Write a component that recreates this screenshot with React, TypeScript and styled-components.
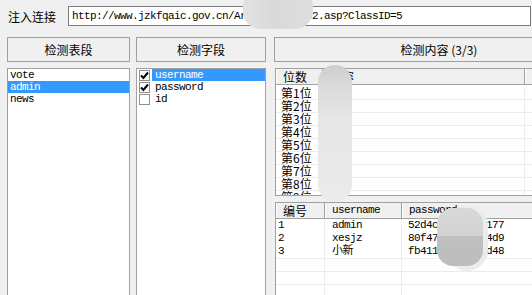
import styled, { createGlobalStyle } from "styled-components";

const MONO = `"Liberation Mono", "Noto Sans CJK SC", monospace`;
const CJK = `"Noto Sans CJK SC", "Liberation Sans", sans-serif`;

const GlobalStyle = createGlobalStyle`
  html, body {
    margin: 0;
    padding: 0;
    background: #f0f0f0;
  }
  body {
    font-family: ${CJK};
  }
`;

const tables = ["vote", "admin", "news"];
const fields = [
  { name: "username", checked: true },
  { name: "password", checked: true },
  { name: "id", checked: false },
];
const digits = [1, 2, 3, 4, 5, 6, 7, 8, 9];
const rows = [
  { no: "1", user: "admin", pass: "52d4c9a0b3e5f177" },
  { no: "2", user: "xesjz", pass: "80f47b2e6a1cd4d9" },
  { no: "3", user: "小新", pass: "fb411e7c95a30d48" },
];

function Check() {
  return (
    <svg width="9" height="9" viewBox="0 0 9 9">
      <path d="M1 4.5 L3.4 7 L8 1.5" fill="none" stroke="#000" strokeWidth="2" />
    </svg>
  );
}

export default function App() {
  return (
    <>
      <GlobalStyle />
      <Window>
        <UrlRow>
          <Label>注入连接</Label>
          <UrlInput>http://www.jzkfqaic.gov.cn/Article/list02.asp?ClassID=5</UrlInput>
        </UrlRow>
        <Columns>
          <Column $width={123}>
            <Button>检测表段</Button>
            <ListBox>
              {tables.map((t) => (
                <ListItem key={t} $selected={t === "admin"}>
                  {t}
                </ListItem>
              ))}
            </ListBox>
          </Column>
          <Column $width={130} $ml={6}>
            <Button>检测字段</Button>
            <ListBox>
              {fields.map((f) => (
                <CheckRow key={f.name}>
                  <CheckBox>{f.checked && <Check />}</CheckBox>
                  <CheckText $selected={f.name === "username"}>{f.name}</CheckText>
                </CheckRow>
              ))}
            </ListBox>
          </Column>
          <Column $width={330} $ml={8}>
            <Button>检测内容 (3/3)</Button>
            <ListView $height={128}>
              <HeaderRow>
                <HeadCell $w={47}>位数</HeadCell>
                <HeadCell $w={202}>内容</HeadCell>
                <HeadCell $w={80} />
              </HeaderRow>
              <Body>
                {digits.map((d) => (
                  <GridRow key={d} $lines>
                    <Cell $w={47} $pad={5} $cjk>第{d}位</Cell>
                    <Cell $w={202} />
                    <Cell $w={80} />
                  </GridRow>
                ))}
              </Body>
            </ListView>
            <ListView $height={100}>
              <HeaderRow>
                <HeadCell $w={49}>编号</HeadCell>
                <HeadCell $w={77} $mono>username</HeadCell>
                <HeadCell $w={200} $mono>password</HeadCell>
              </HeaderRow>
              <Body $top={0}>
                {rows.map((r) => (
                  <GridRow key={r.no}>
                    <Cell $w={49} $pad={2}>{r.no}</Cell>
                    <Cell $w={77} $pad={7}>{r.user}</Cell>
                    <Cell $w={200} $pad={6}>{r.pass}</Cell>
                  </GridRow>
                ))}
                {[0, 1, 2].map((i) => (
                  <GridRow key={i} $lines $topLine>
                    <Cell $w={49} />
                    <Cell $w={77} />
                    <Cell $w={200} />
                  </GridRow>
                ))}
              </Body>
            </ListView>
          </Column>
        </Columns>
        <Smudge $x={243} $y={-12} $w={70} $h={41} $r={18} $bg="linear-gradient(90deg, #e2e2e2 0%, #d9d9d9 45%, #dedede 100%)" />
        <Smudge $x={318} $y={65} $w={34} $h={137} $r={17} $bg="linear-gradient(180deg, #cdcdcd 0%, #d9d9d9 14%, #e6e6e6 40%, #ebebeb 100%)" />
        <Smudge $x={446} $y={205} $w={42} $h={66} $r={21} $bg="#ececec" />
        <Smudge $x={437} $y={208} $w={46} $h={58} $r={16} $bg="linear-gradient(180deg, #d8d8d8 0%, #d2d2d2 48%, #bfbfbf 49%, #bdbdbd 100%)" />
      </Window>
    </>
  );
}

const Window = styled.div`
  position: relative;
  width: 532px;
  height: 295px;
  overflow: hidden;
  box-sizing: border-box;
  padding: 6px 0 0 7px;
  background: #f0f0f0;
  display: flex;
  flex-direction: column;
  gap: 11px;
`;

const UrlRow = styled.div`
  display: flex;
  align-items: center;
  height: 20px;
`;

const Label = styled.div`
  width: 61px;
  padding-left: 1px;
  box-sizing: border-box;
  font-family: ${CJK};
  font-size: 12px;
  color: #000;
`;

const UrlInput = styled.div`
  width: 463px;
  height: 20px;
  box-sizing: border-box;
  border: 1px solid #7a7a7a;
  background: #fff;
  padding-left: 3px;
  font-family: ${MONO};
  font-size: 11px;
  letter-spacing: -0.6px;
  line-height: 18px;
  white-space: nowrap;
  overflow: hidden;
`;

const Columns = styled.div`
  display: flex;
  align-items: flex-start;
`;

const Column = styled.div<{ $width: number; $ml?: number }>`
  flex: none;
  width: ${(p) => p.$width}px;
  margin-left: ${(p) => p.$ml ?? 0}px;
  display: flex;
  flex-direction: column;
  gap: 6px;
`;

const Button = styled.div`
  height: 25px;
  box-sizing: border-box;
  border: 1px solid #a0a0a0;
  background: #f0f0f0;
  display: flex;
  align-items: center;
  justify-content: center;
  font-family: ${CJK};
  font-size: 12px;
  color: #000;
`;

const ListBox = styled.div`
  height: 240px;
  box-sizing: border-box;
  border: 1px solid #a0a0a0;
  background: #fff;
  font-family: ${MONO};
  font-size: 11px;
  letter-spacing: -0.6px;
`;

const ListItem = styled.div<{ $selected?: boolean }>`
  height: 12px;
  line-height: 12px;
  padding-left: 2px;
  background: ${(p) => (p.$selected ? "#3399ff" : "transparent")};
  color: ${(p) => (p.$selected ? "#fff" : "#000")};
`;

const CheckRow = styled.div`
  display: flex;
  align-items: center;
  height: 12px;
  padding-left: 2px;
`;

const CheckBox = styled.div`
  flex: none;
  width: 11px;
  height: 11px;
  box-sizing: border-box;
  border: 1px solid #8f8f8f;
  background: #fff;
  display: flex;
  align-items: center;
  justify-content: center;
  margin-right: 2px;
`;

const CheckText = styled.div<{ $selected?: boolean }>`
  flex: 1;
  height: 12px;
  line-height: 12px;
  padding-left: 3px;
  background: ${(p) => (p.$selected ? "#3399ff" : "transparent")};
  color: ${(p) => (p.$selected ? "#fff" : "#000")};
`;

const ListView = styled.div<{ $height: number }>`
  height: ${(p) => p.$height}px;
  margin-left: 1px;
  box-sizing: border-box;
  border: 1px solid #a0a0a0;
  background: #fff;
  overflow: hidden;
`;

const HeaderRow = styled.div`
  display: flex;
  height: 16px;
  box-sizing: border-box;
  border-bottom: 1px solid #a0a0a0;
  background: #f0f0f0;
`;

const HeadCell = styled.div<{ $w: number; $mono?: boolean }>`
  flex: none;
  width: ${(p) => p.$w}px;
  box-sizing: border-box;
  border-right: 1px solid #a0a0a0;
  border-left: 1px solid #ffffff;
  padding-left: 6px;
  line-height: 15px;
  white-space: nowrap;
  font-family: ${(p) => (p.$mono ? MONO : CJK)};
  font-size: ${(p) => (p.$mono ? "11px" : "12px")};
  letter-spacing: ${(p) => (p.$mono ? "-0.6px" : "0")};
  color: #000;
`;

const Body = styled.div<{ $top?: number }>`
  padding-top: ${(p) => p.$top ?? 2}px;
`;

const GridRow = styled.div<{ $lines?: boolean; $topLine?: boolean }>`
  display: flex;
  height: 13px;
  box-sizing: border-box;
  ${(p) =>
    p.$lines
      ? p.$topLine
        ? "border-top: 1px solid #ececec;"
        : "border-bottom: 1px solid #ececec;"
      : ""}
`;

const Cell = styled.div<{ $w: number; $pad?: number; $cjk?: boolean }>`
  flex: none;
  width: ${(p) => p.$w}px;
  box-sizing: border-box;
  border-right: 1px solid #ececec;
  padding-left: ${(p) => p.$pad ?? 0}px;
  line-height: 12px;
  white-space: nowrap;
  font-family: ${(p) => (p.$cjk ? CJK : MONO)};
  font-size: ${(p) => (p.$cjk ? "12px" : "11px")};
  letter-spacing: ${(p) => (p.$cjk ? "0" : "-0.6px")};
  color: #000;
`;

const Smudge = styled.div<{ $x: number; $y: number; $w: number; $h: number; $r: number; $bg: string }>`
  position: absolute;
  left: ${(p) => p.$x}px;
  top: ${(p) => p.$y}px;
  width: ${(p) => p.$w}px;
  height: ${(p) => p.$h}px;
  border-radius: ${(p) => p.$r}px;
  background: ${(p) => p.$bg};
`;
